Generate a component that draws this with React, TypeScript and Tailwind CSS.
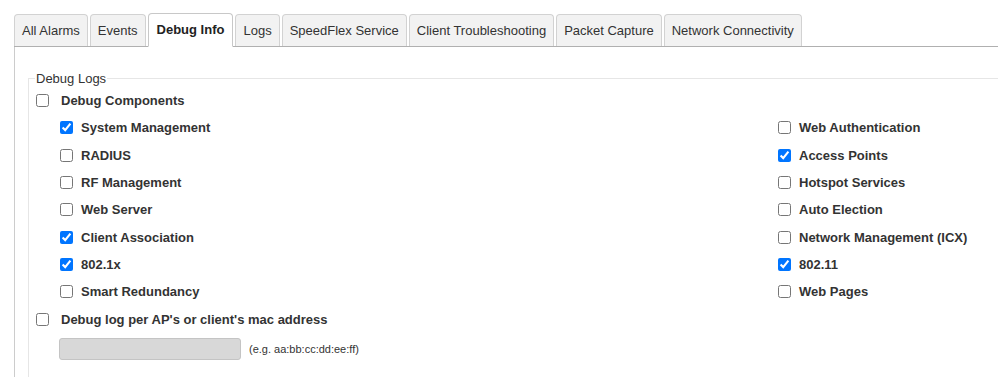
import React from "react"

const tabs = [
  "All Alarms",
  "Events",
  "Debug Info",
  "Logs",
  "SpeedFlex Service",
  "Client Troubleshooting",
  "Packet Capture",
  "Network Connectivity",
]

const leftItems = [
  { label: "System Management", checked: true },
  { label: "RADIUS", checked: false },
  { label: "RF Management", checked: false },
  { label: "Web Server", checked: false },
  { label: "Client Association", checked: true },
  { label: "802.1x", checked: true },
  { label: "Smart Redundancy", checked: false },
]

const rightItems = [
  { label: "Web Authentication", checked: false },
  { label: "Access Points", checked: true },
  { label: "Hotspot Services", checked: false },
  { label: "Auto Election", checked: false },
  { label: "Network Management (ICX)", checked: false },
  { label: "802.11", checked: true },
  { label: "Web Pages", checked: false },
]

function Check({ label, checked }: { label: string; checked: boolean }) {
  return (
    <label className="flex h-[27.33px] items-center gap-[8px]">
      <input type="checkbox" defaultChecked={checked} className="h-[13px] w-[13px]" />
      <span className="font-bold">{label}</span>
    </label>
  )
}

export default function App() {
  return (
    <div
      className="h-[377px] w-[998px] overflow-hidden bg-white pl-[14px] pt-[13px] text-[13px] text-[#333]"
      style={{ fontFamily: '"Liberation Sans", Arial, sans-serif' }}
    >
      {/* tab bar */}
      <div className="flex w-[1000px] items-end gap-[2px] border-b border-[#b0b0b0]">
        {tabs.map((t) =>
          t === "Debug Info" ? (
            <div
              key={t}
              className="-mb-px flex h-[34px] items-center rounded-t-[4px] border border-b-white border-[#c8c8c8] bg-white px-[8px] font-bold text-[#222]"
            >
              {t}
            </div>
          ) : (
            <div
              key={t}
              className="flex h-[32px] items-center rounded-t-[4px] border border-b-0 border-[#d2d2d2] bg-[#f2f2f2] px-[7px]"
            >
              {t}
            </div>
          )
        )}
      </div>

      {/* panel */}
      <div className="h-[400px] w-[1020px] border-l border-[#cccccc] pl-[13px] pt-[24px]">
        <fieldset className="h-[400px] border border-[#e6e6e6] pl-[7px]">
          <legend className="-ml-[1px] px-[1px] leading-[15px]">Debug Logs</legend>

          <div className="pt-[1px]">
            <label className="flex h-[27.33px] items-center gap-3">
              <input type="checkbox" className="h-[13px] w-[13px]" />
              <span className="font-bold">Debug Components</span>
            </label>

            <div className="flex pl-[24px]">
              <div className="w-[718px]">
                {leftItems.map((i) => (
                  <Check key={i.label} {...i} />
                ))}
              </div>
              <div>
                {rightItems.map((i) => (
                  <Check key={i.label} {...i} />
                ))}
              </div>
            </div>

            <label className="flex h-[27.33px] items-center gap-3">
              <input type="checkbox" className="h-[13px] w-[13px]" />
              <span className="font-bold">Debug log per AP's or client's mac address</span>
            </label>

            <div className="mt-[5px] flex items-center gap-[8px] pl-[23px]">
              <div className="h-[22px] w-[182px] rounded-[3px] border border-[#c4c4c4] bg-[#d8d8d8]" />
              <span className="text-[11px]">(e.g. aa:bb:cc:dd:ee:ff)</span>
            </div>
          </div>
        </fieldset>
      </div>
    </div>
  )
}
